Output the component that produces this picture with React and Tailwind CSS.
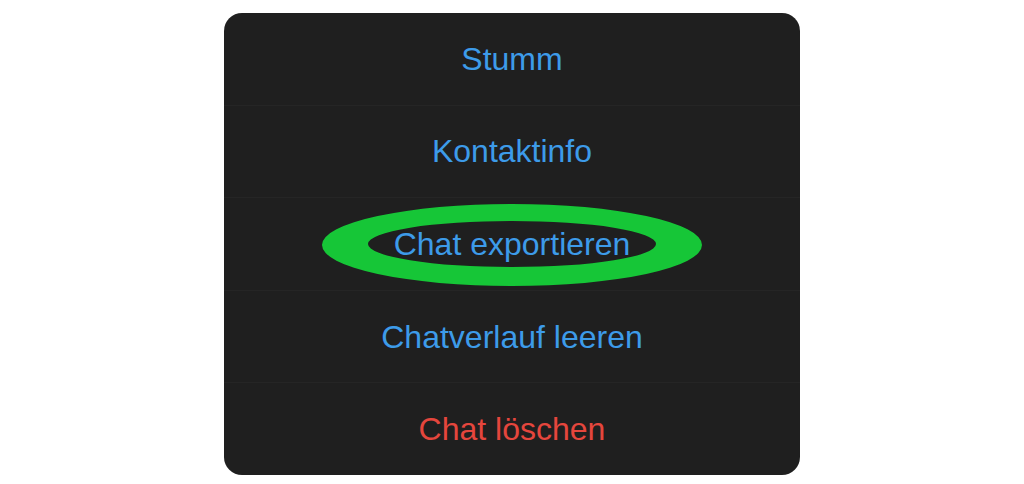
const items = [
  { label: "Stumm", color: "text-[#3d9be9]" },
  { label: "Kontaktinfo", color: "text-[#3d9be9]" },
  { label: "Chat exportieren", color: "text-[#3d9be9]", marked: true },
  { label: "Chatverlauf leeren", color: "text-[#3d9be9]" },
  { label: "Chat löschen", color: "text-[#e5463d]" },
];

function Highlight() {
  // hand-drawn green ring around the marked entry
  return (
    <svg
      className="absolute left-[96px] top-[-41px] pointer-events-none"
      width="384"
      height="84"
      viewBox="0 0 384 84"
    >
      <path
        fillRule="evenodd"
        fill="#16c637"
        d="M2 42 A190 41 0 1 0 382 42 A190 41 0 1 0 2 42 Z M48 41 A144 23 0 1 0 336 41 A144 23 0 1 0 48 41 Z"
      />
    </svg>
  );
}

export default function App() {
  return (
    <div className="w-[1024px] h-[484px] bg-white flex justify-center pt-[13px]">
      <div
        className="w-[576px] h-[462px] bg-[#1f1f1f] rounded-[18px] flex flex-col overflow-hidden"
        style={{ fontFamily: '"Liberation Sans", Arial, sans-serif' }}
      >
        {items.map((it, i) => (
          <div
            key={it.label}
            className={`relative flex-1 flex items-center justify-center ${
              i > 0 ? "border-t border-[#252525]" : ""
            }`}
          >
            {it.marked && (
              <div className="absolute left-0 top-1/2 w-full">
                <Highlight />
              </div>
            )}
            <span className={`relative text-[32px] leading-none ${it.color}`}>
              {it.label}
            </span>
          </div>
        ))}
      </div>
    </div>
  );
}
